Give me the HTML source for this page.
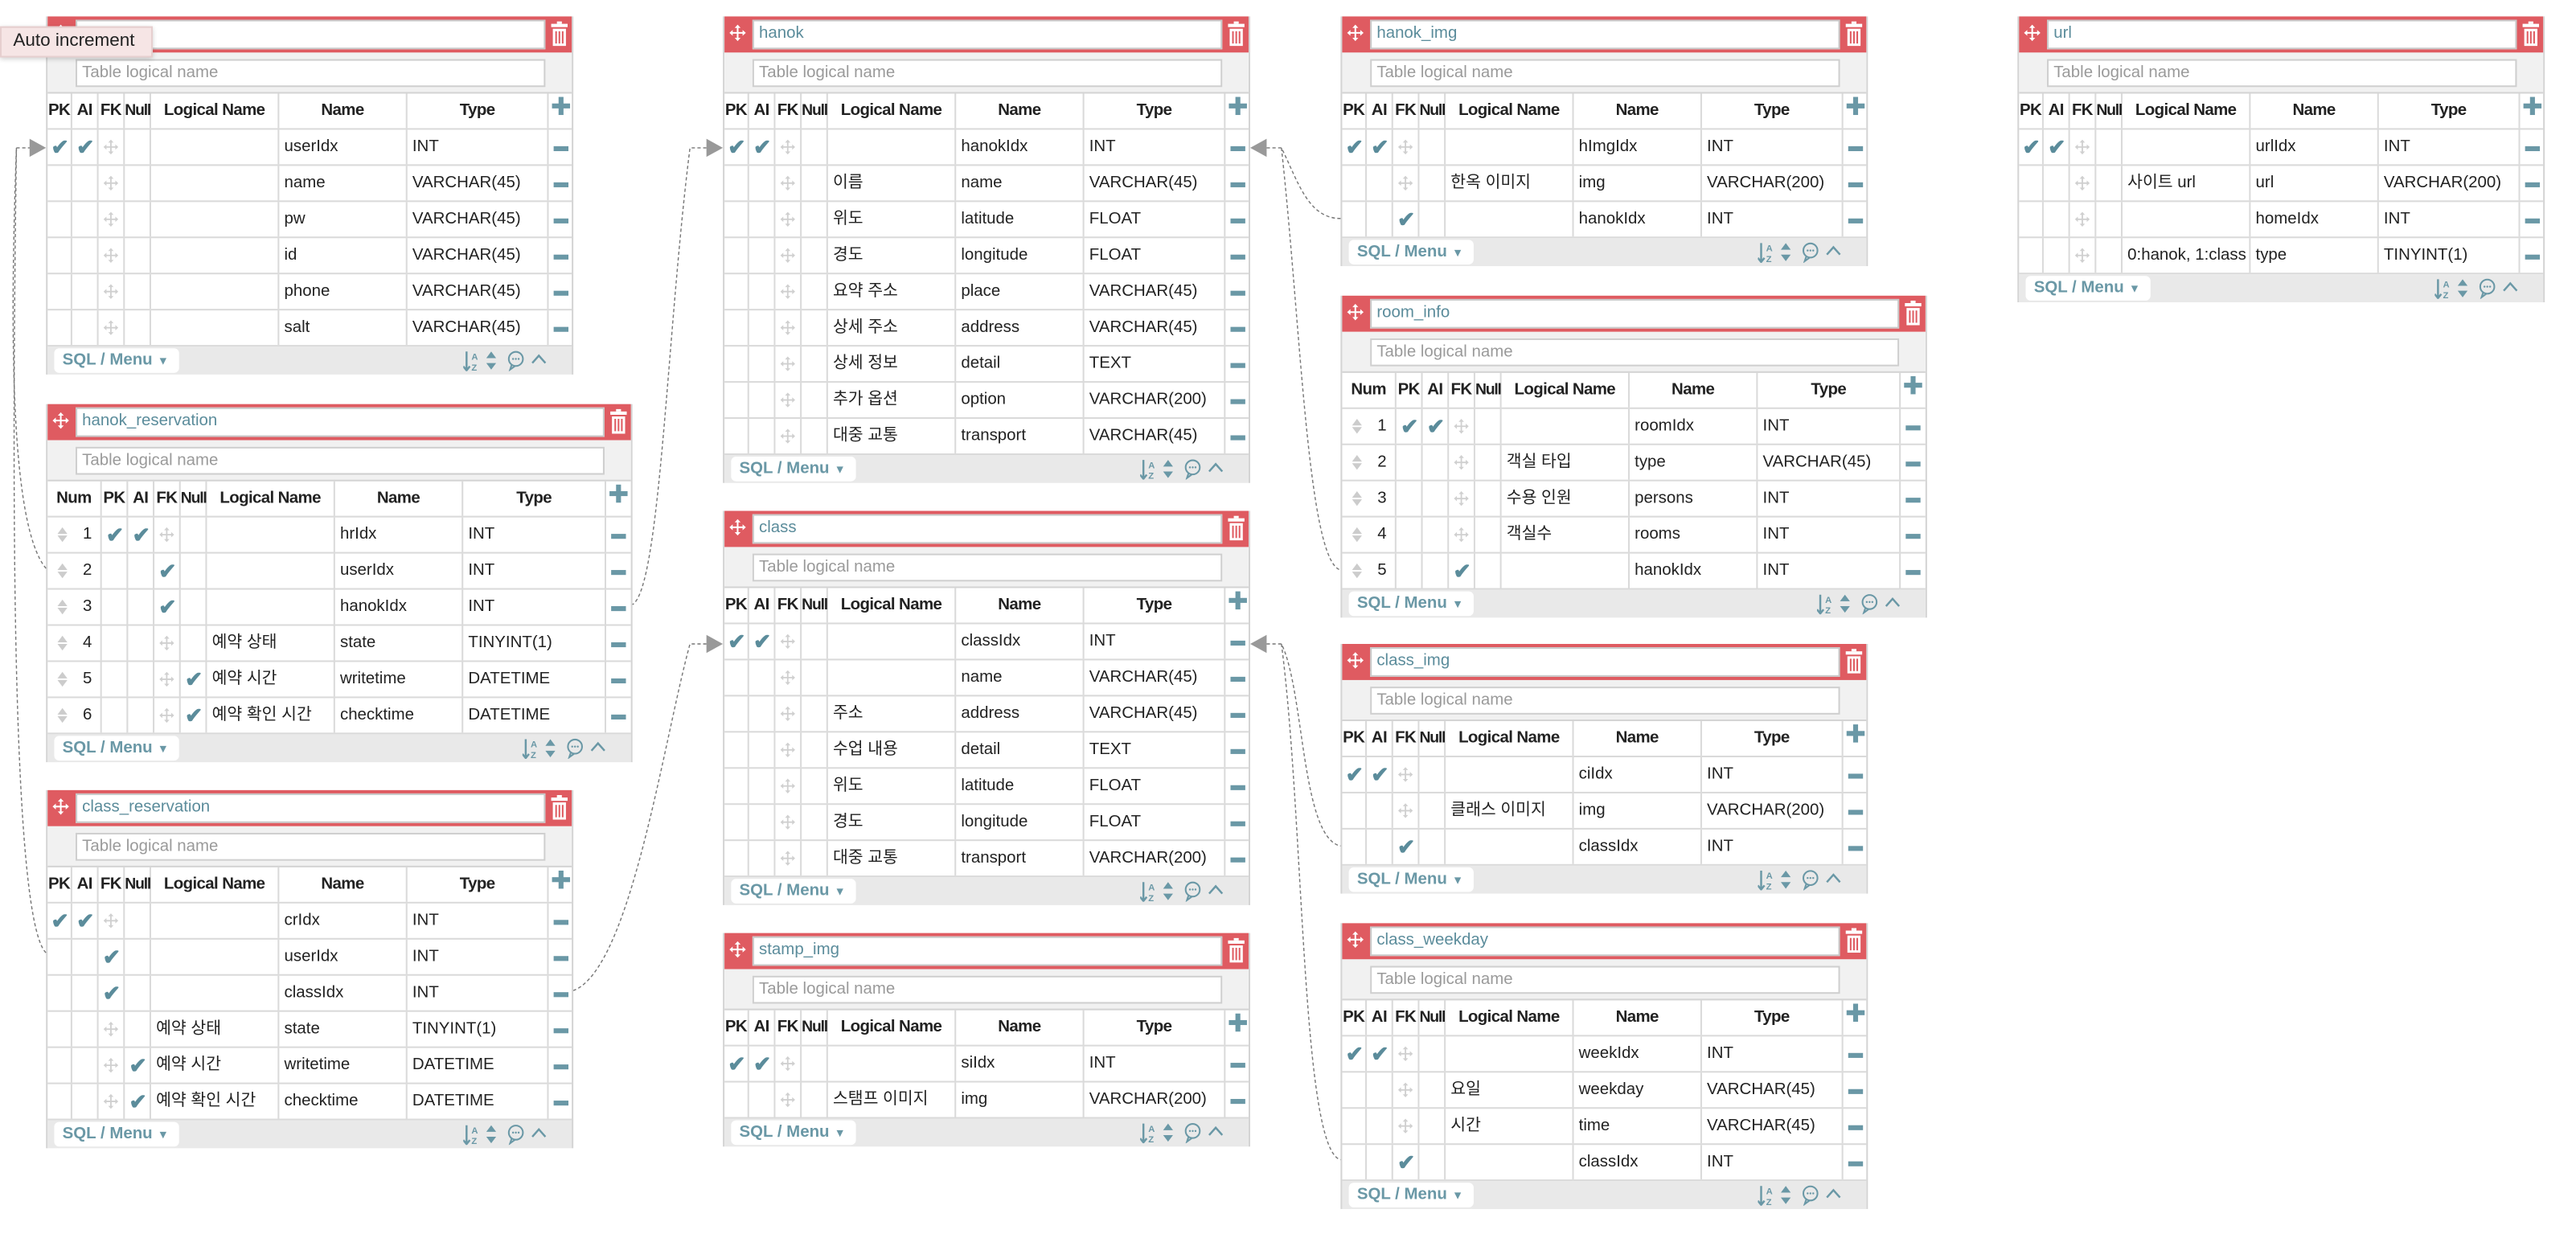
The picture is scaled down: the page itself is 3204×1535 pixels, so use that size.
<!DOCTYPE html>
<html><head><meta charset="utf-8">
<style>
*{box-sizing:border-box;margin:0;padding:0}
body{width:3204px;height:1534px;background:#fff;overflow:hidden;font-family:"Liberation Sans","Noto Sans CJK KR",sans-serif;color:#222}
#w{position:absolute;left:0;top:0;width:1568px;height:751px;transform:scale(2.043367);transform-origin:0 0}
.t{position:absolute;background:#fff;border-left:1px solid #d4d4d4;border-right:1px solid #d4d4d4}
.hd{height:22px;background:#df5b61;position:relative}
.hd .mv{position:absolute;left:3px;top:5px;width:10px;height:10px;fill:#fff}
.hd .in{position:absolute;left:17px;right:16px;top:2px;height:18px;background:#fff;border:1px solid #c9c9c9;color:#5b8c9b;font-size:10px;line-height:16px;padding-left:3px}
.hd .tr{position:absolute;right:2px;top:3px;width:11px;height:15px}
.ln{height:25px;background:#f1f1f1;position:relative;border-bottom:1px solid #d4d4d4}
.ln .in{position:absolute;left:17px;right:16px;top:4px;height:17px;background:#fff;border:1px solid #cfcfcf;color:#9a9a9a;font-size:10px;line-height:15px;padding-left:3px}
.r{display:grid;height:22px;border-bottom:1px solid #dadada;font-size:10px;line-height:21px}
.a .r{grid-template-columns:15px 16px 16px 16px 78px 78px 86px 14px}
.m .r{grid-template-columns:33px 16px 16px 16px 16px 78px 78px 87px 14px}
.r>div{border-right:1px solid #dadada;overflow:hidden;white-space:nowrap;padding-left:3px;position:relative}
.r>div:last-child{border-right:none}
.h{font-weight:bold;text-align:center;letter-spacing:-0.3px}
.h>div{padding-left:0;overflow:visible!important}
.h>div:nth-last-child(5){font-size:9.5px;letter-spacing:-0.6px}
.k{color:#5b8c9b;font-size:13px;font-weight:bold;padding-left:1px!important;text-align:center}
.f svg{position:absolute;left:3px;top:6px;width:9px;height:9px;fill:#d0d0d0}
.x i{position:absolute;left:3px;top:10px;width:9px;height:3px;background:#6a98a6}
.p i{position:absolute;left:2px;top:6px;width:11px;height:3px;background:#6a98a6}
.p b{position:absolute;left:6px;top:2px;width:3px;height:11px;background:#6a98a6}
.nm{text-align:right;padding-right:5px}
.nm s{position:absolute;left:6px;top:6px;width:6px;height:10px}
.nm s:before{content:"";position:absolute;left:0;top:0;border-left:3px solid transparent;border-right:3px solid transparent;border-bottom:4px solid #ccc}
.nm s:after{content:"";position:absolute;left:0;top:5px;border-left:3px solid transparent;border-right:3px solid transparent;border-top:4px solid #ccc}
.ft{height:17px;background:#e9e9e9;position:relative}
.sq{position:absolute;left:4px;top:1px;height:15px;width:76px;background:#fff;border-radius:3px;color:#6a98a6;font-weight:bold;font-size:10px;line-height:15px;padding-left:5px}
.sq em{font-style:normal;font-size:7px;margin-left:3px}
.ft svg.ic{position:absolute;right:4px;top:2px;width:62px;height:13px}
#tip{position:absolute;left:0;top:16px;width:93px;height:19px;background:#f6e5e5;border:1px solid #e6cfcf;box-shadow:0 1px 3px rgba(0,0,0,.2);font-size:11px;line-height:17px;padding-left:7px;color:#222;z-index:5}
#cn{position:absolute;left:0;top:0;width:1568px;height:751px;z-index:4}
</style></head><body>
<svg width="0" height="0" style="position:absolute">
<defs>
<symbol id="mv" viewBox="0 0 10 10"><path d="M5 0L3.2 2H4.5V4.5H2V3.2L0 5L2 6.8V5.5H4.5V8H3.2L5 10L6.8 8H5.5V5.5H8V6.8L10 5L8 3.2V4.5H5.5V2H6.8Z"/></symbol>
<symbol id="tr" viewBox="0 0 11 15"><g fill="#fff"><rect x="4" y="0" width="3" height="1.5"/><rect x="0.5" y="1.5" width="10" height="2"/><path d="M1.5 4.5H9.5V15H1.5ZM3 6V13.5H4V6ZM5 6V13.5H6V6ZM7 6V13.5H8V6Z" fill-rule="evenodd"/></g></symbol>
<symbol id="ic" viewBox="0 0 62 13"><g fill="#6a98a6" stroke="#6a98a6"><path d="M2 1V12M0 10L2 12.5L4 10" fill="none" stroke-width="1.2"/><text x="5" y="6" font-size="5.5" font-family="Liberation Sans" stroke="none" font-weight="bold">A</text><text x="5" y="12.5" font-size="5.5" font-family="Liberation Sans" stroke="none" font-weight="bold">Z</text><path d="M17 1L20 5H14ZM17 12L20 8H14Z" stroke="none"/><circle cx="32" cy="5.5" r="4.3" fill="none" stroke-width="1"/><path d="M29.5 9L28.5 12L31.5 9.8" fill="none" stroke-width="1"/><circle cx="30.3" cy="5.5" r=".6" stroke="none"/><circle cx="32" cy="5.5" r=".6" stroke="none"/><circle cx="33.7" cy="5.5" r=".6" stroke="none"/><path d="M42 8L46 3.5L50 8" fill="none" stroke-width="1.2"/></g></symbol>
</defs></svg>
<div id="w">
<div id="tip">Auto increment</div>

<!-- user -->
<div class="t a" style="left:28px;top:10px;width:321px">
<div class="hd"><svg class="mv"><use href="#mv"/></svg><div class="in"></div><svg class="tr"><use href="#tr"/></svg></div>
<div class="ln"><div class="in">Table logical name</div></div>
<div class="r h"><div>PK</div><div>AI</div><div>FK</div><div>Null</div><div>Logical Name</div><div>Name</div><div>Type</div><div class="p"><i></i><b></b></div></div>
<div class="r"><div class="k">✔</div><div class="k">✔</div><div class="f"><svg><use href="#mv"/></svg></div><div></div><div></div><div>userIdx</div><div>INT</div><div class="x"><i></i></div></div>
<div class="r"><div></div><div></div><div class="f"><svg><use href="#mv"/></svg></div><div></div><div></div><div>name</div><div>VARCHAR(45)</div><div class="x"><i></i></div></div>
<div class="r"><div></div><div></div><div class="f"><svg><use href="#mv"/></svg></div><div></div><div></div><div>pw</div><div>VARCHAR(45)</div><div class="x"><i></i></div></div>
<div class="r"><div></div><div></div><div class="f"><svg><use href="#mv"/></svg></div><div></div><div></div><div>id</div><div>VARCHAR(45)</div><div class="x"><i></i></div></div>
<div class="r"><div></div><div></div><div class="f"><svg><use href="#mv"/></svg></div><div></div><div></div><div>phone</div><div>VARCHAR(45)</div><div class="x"><i></i></div></div>
<div class="r"><div></div><div></div><div class="f"><svg><use href="#mv"/></svg></div><div></div><div></div><div>salt</div><div>VARCHAR(45)</div><div class="x"><i></i></div></div>
<div class="ft"><span class="sq">SQL / Menu<em>▼</em></span><svg class="ic"><use href="#ic"/></svg></div>
</div>

<!-- hanok_reservation -->
<div class="t m" style="left:28px;top:246px;width:357px">
<div class="hd"><svg class="mv"><use href="#mv"/></svg><div class="in">hanok_reservation</div><svg class="tr"><use href="#tr"/></svg></div>
<div class="ln"><div class="in">Table logical name</div></div>
<div class="r h"><div>Num</div><div>PK</div><div>AI</div><div>FK</div><div>Null</div><div>Logical Name</div><div>Name</div><div>Type</div><div class="p"><i></i><b></b></div></div>
<div class="r"><div class="nm"><s></s>1</div><div class="k">✔</div><div class="k">✔</div><div class="f"><svg><use href="#mv"/></svg></div><div></div><div></div><div>hrIdx</div><div>INT</div><div class="x"><i></i></div></div>
<div class="r"><div class="nm"><s></s>2</div><div></div><div></div><div class="k">✔</div><div></div><div></div><div>userIdx</div><div>INT</div><div class="x"><i></i></div></div>
<div class="r"><div class="nm"><s></s>3</div><div></div><div></div><div class="k">✔</div><div></div><div></div><div>hanokIdx</div><div>INT</div><div class="x"><i></i></div></div>
<div class="r"><div class="nm"><s></s>4</div><div></div><div></div><div class="f"><svg><use href="#mv"/></svg></div><div></div><div>예약 상태</div><div>state</div><div>TINYINT(1)</div><div class="x"><i></i></div></div>
<div class="r"><div class="nm"><s></s>5</div><div></div><div></div><div class="f"><svg><use href="#mv"/></svg></div><div class="k">✔</div><div>예약 시간</div><div>writetime</div><div>DATETIME</div><div class="x"><i></i></div></div>
<div class="r"><div class="nm"><s></s>6</div><div></div><div></div><div class="f"><svg><use href="#mv"/></svg></div><div class="k">✔</div><div>예약 확인 시간</div><div>checktime</div><div>DATETIME</div><div class="x"><i></i></div></div>
<div class="ft"><span class="sq">SQL / Menu<em>▼</em></span><svg class="ic"><use href="#ic"/></svg></div>
</div>

<!-- class_reservation -->
<div class="t a" style="left:28px;top:481px;width:321px">
<div class="hd"><svg class="mv"><use href="#mv"/></svg><div class="in">class_reservation</div><svg class="tr"><use href="#tr"/></svg></div>
<div class="ln"><div class="in">Table logical name</div></div>
<div class="r h"><div>PK</div><div>AI</div><div>FK</div><div>Null</div><div>Logical Name</div><div>Name</div><div>Type</div><div class="p"><i></i><b></b></div></div>
<div class="r"><div class="k">✔</div><div class="k">✔</div><div class="f"><svg><use href="#mv"/></svg></div><div></div><div></div><div>crIdx</div><div>INT</div><div class="x"><i></i></div></div>
<div class="r"><div></div><div></div><div class="k">✔</div><div></div><div></div><div>userIdx</div><div>INT</div><div class="x"><i></i></div></div>
<div class="r"><div></div><div></div><div class="k">✔</div><div></div><div></div><div>classIdx</div><div>INT</div><div class="x"><i></i></div></div>
<div class="r"><div></div><div></div><div class="f"><svg><use href="#mv"/></svg></div><div></div><div>예약 상태</div><div>state</div><div>TINYINT(1)</div><div class="x"><i></i></div></div>
<div class="r"><div></div><div></div><div class="f"><svg><use href="#mv"/></svg></div><div class="k">✔</div><div>예약 시간</div><div>writetime</div><div>DATETIME</div><div class="x"><i></i></div></div>
<div class="r"><div></div><div></div><div class="f"><svg><use href="#mv"/></svg></div><div class="k">✔</div><div>예약 확인 시간</div><div>checktime</div><div>DATETIME</div><div class="x"><i></i></div></div>
<div class="ft"><span class="sq">SQL / Menu<em>▼</em></span><svg class="ic"><use href="#ic"/></svg></div>
</div>

<!-- hanok -->
<div class="t a" style="left:440px;top:10px;width:321px">
<div class="hd"><svg class="mv"><use href="#mv"/></svg><div class="in">hanok</div><svg class="tr"><use href="#tr"/></svg></div>
<div class="ln"><div class="in">Table logical name</div></div>
<div class="r h"><div>PK</div><div>AI</div><div>FK</div><div>Null</div><div>Logical Name</div><div>Name</div><div>Type</div><div class="p"><i></i><b></b></div></div>
<div class="r"><div class="k">✔</div><div class="k">✔</div><div class="f"><svg><use href="#mv"/></svg></div><div></div><div></div><div>hanokIdx</div><div>INT</div><div class="x"><i></i></div></div>
<div class="r"><div></div><div></div><div class="f"><svg><use href="#mv"/></svg></div><div></div><div>이름</div><div>name</div><div>VARCHAR(45)</div><div class="x"><i></i></div></div>
<div class="r"><div></div><div></div><div class="f"><svg><use href="#mv"/></svg></div><div></div><div>위도</div><div>latitude</div><div>FLOAT</div><div class="x"><i></i></div></div>
<div class="r"><div></div><div></div><div class="f"><svg><use href="#mv"/></svg></div><div></div><div>경도</div><div>longitude</div><div>FLOAT</div><div class="x"><i></i></div></div>
<div class="r"><div></div><div></div><div class="f"><svg><use href="#mv"/></svg></div><div></div><div>요약 주소</div><div>place</div><div>VARCHAR(45)</div><div class="x"><i></i></div></div>
<div class="r"><div></div><div></div><div class="f"><svg><use href="#mv"/></svg></div><div></div><div>상세 주소</div><div>address</div><div>VARCHAR(45)</div><div class="x"><i></i></div></div>
<div class="r"><div></div><div></div><div class="f"><svg><use href="#mv"/></svg></div><div></div><div>상세 정보</div><div>detail</div><div>TEXT</div><div class="x"><i></i></div></div>
<div class="r"><div></div><div></div><div class="f"><svg><use href="#mv"/></svg></div><div></div><div>추가 옵션</div><div>option</div><div>VARCHAR(200)</div><div class="x"><i></i></div></div>
<div class="r"><div></div><div></div><div class="f"><svg><use href="#mv"/></svg></div><div></div><div>대중 교통</div><div>transport</div><div>VARCHAR(45)</div><div class="x"><i></i></div></div>
<div class="ft"><span class="sq">SQL / Menu<em>▼</em></span><svg class="ic"><use href="#ic"/></svg></div>
</div>

<!-- class -->
<div class="t a" style="left:440px;top:311px;width:321px">
<div class="hd"><svg class="mv"><use href="#mv"/></svg><div class="in">class</div><svg class="tr"><use href="#tr"/></svg></div>
<div class="ln"><div class="in">Table logical name</div></div>
<div class="r h"><div>PK</div><div>AI</div><div>FK</div><div>Null</div><div>Logical Name</div><div>Name</div><div>Type</div><div class="p"><i></i><b></b></div></div>
<div class="r"><div class="k">✔</div><div class="k">✔</div><div class="f"><svg><use href="#mv"/></svg></div><div></div><div></div><div>classIdx</div><div>INT</div><div class="x"><i></i></div></div>
<div class="r"><div></div><div></div><div class="f"><svg><use href="#mv"/></svg></div><div></div><div></div><div>name</div><div>VARCHAR(45)</div><div class="x"><i></i></div></div>
<div class="r"><div></div><div></div><div class="f"><svg><use href="#mv"/></svg></div><div></div><div>주소</div><div>address</div><div>VARCHAR(45)</div><div class="x"><i></i></div></div>
<div class="r"><div></div><div></div><div class="f"><svg><use href="#mv"/></svg></div><div></div><div>수업 내용</div><div>detail</div><div>TEXT</div><div class="x"><i></i></div></div>
<div class="r"><div></div><div></div><div class="f"><svg><use href="#mv"/></svg></div><div></div><div>위도</div><div>latitude</div><div>FLOAT</div><div class="x"><i></i></div></div>
<div class="r"><div></div><div></div><div class="f"><svg><use href="#mv"/></svg></div><div></div><div>경도</div><div>longitude</div><div>FLOAT</div><div class="x"><i></i></div></div>
<div class="r"><div></div><div></div><div class="f"><svg><use href="#mv"/></svg></div><div></div><div>대중 교통</div><div>transport</div><div>VARCHAR(200)</div><div class="x"><i></i></div></div>
<div class="ft"><span class="sq">SQL / Menu<em>▼</em></span><svg class="ic"><use href="#ic"/></svg></div>
</div>

<!-- stamp_img -->
<div class="t a" style="left:440px;top:568px;width:321px">
<div class="hd"><svg class="mv"><use href="#mv"/></svg><div class="in">stamp_img</div><svg class="tr"><use href="#tr"/></svg></div>
<div class="ln"><div class="in">Table logical name</div></div>
<div class="r h"><div>PK</div><div>AI</div><div>FK</div><div>Null</div><div>Logical Name</div><div>Name</div><div>Type</div><div class="p"><i></i><b></b></div></div>
<div class="r"><div class="k">✔</div><div class="k">✔</div><div class="f"><svg><use href="#mv"/></svg></div><div></div><div></div><div>siIdx</div><div>INT</div><div class="x"><i></i></div></div>
<div class="r"><div></div><div></div><div class="f"><svg><use href="#mv"/></svg></div><div></div><div>스탬프 이미지</div><div>img</div><div>VARCHAR(200)</div><div class="x"><i></i></div></div>
<div class="ft"><span class="sq">SQL / Menu<em>▼</em></span><svg class="ic"><use href="#ic"/></svg></div>
</div>

<!-- hanok_img -->
<div class="t a" style="left:816px;top:10px;width:321px">
<div class="hd"><svg class="mv"><use href="#mv"/></svg><div class="in">hanok_img</div><svg class="tr"><use href="#tr"/></svg></div>
<div class="ln"><div class="in">Table logical name</div></div>
<div class="r h"><div>PK</div><div>AI</div><div>FK</div><div>Null</div><div>Logical Name</div><div>Name</div><div>Type</div><div class="p"><i></i><b></b></div></div>
<div class="r"><div class="k">✔</div><div class="k">✔</div><div class="f"><svg><use href="#mv"/></svg></div><div></div><div></div><div>hImgIdx</div><div>INT</div><div class="x"><i></i></div></div>
<div class="r"><div></div><div></div><div class="f"><svg><use href="#mv"/></svg></div><div></div><div>한옥 이미지</div><div>img</div><div>VARCHAR(200)</div><div class="x"><i></i></div></div>
<div class="r"><div></div><div></div><div class="k">✔</div><div></div><div></div><div>hanokIdx</div><div>INT</div><div class="x"><i></i></div></div>
<div class="ft"><span class="sq">SQL / Menu<em>▼</em></span><svg class="ic"><use href="#ic"/></svg></div>
</div>

<!-- room_info -->
<div class="t m" style="left:816px;top:180px;width:357px">
<div class="hd"><svg class="mv"><use href="#mv"/></svg><div class="in">room_info</div><svg class="tr"><use href="#tr"/></svg></div>
<div class="ln"><div class="in">Table logical name</div></div>
<div class="r h"><div>Num</div><div>PK</div><div>AI</div><div>FK</div><div>Null</div><div>Logical Name</div><div>Name</div><div>Type</div><div class="p"><i></i><b></b></div></div>
<div class="r"><div class="nm"><s></s>1</div><div class="k">✔</div><div class="k">✔</div><div class="f"><svg><use href="#mv"/></svg></div><div></div><div></div><div>roomIdx</div><div>INT</div><div class="x"><i></i></div></div>
<div class="r"><div class="nm"><s></s>2</div><div></div><div></div><div class="f"><svg><use href="#mv"/></svg></div><div></div><div>객실 타입</div><div>type</div><div>VARCHAR(45)</div><div class="x"><i></i></div></div>
<div class="r"><div class="nm"><s></s>3</div><div></div><div></div><div class="f"><svg><use href="#mv"/></svg></div><div></div><div>수용 인원</div><div>persons</div><div>INT</div><div class="x"><i></i></div></div>
<div class="r"><div class="nm"><s></s>4</div><div></div><div></div><div class="f"><svg><use href="#mv"/></svg></div><div></div><div>객실수</div><div>rooms</div><div>INT</div><div class="x"><i></i></div></div>
<div class="r"><div class="nm"><s></s>5</div><div></div><div></div><div class="k">✔</div><div></div><div></div><div>hanokIdx</div><div>INT</div><div class="x"><i></i></div></div>
<div class="ft"><span class="sq">SQL / Menu<em>▼</em></span><svg class="ic"><use href="#ic"/></svg></div>
</div>

<!-- class_img -->
<div class="t a" style="left:816px;top:392px;width:321px">
<div class="hd"><svg class="mv"><use href="#mv"/></svg><div class="in">class_img</div><svg class="tr"><use href="#tr"/></svg></div>
<div class="ln"><div class="in">Table logical name</div></div>
<div class="r h"><div>PK</div><div>AI</div><div>FK</div><div>Null</div><div>Logical Name</div><div>Name</div><div>Type</div><div class="p"><i></i><b></b></div></div>
<div class="r"><div class="k">✔</div><div class="k">✔</div><div class="f"><svg><use href="#mv"/></svg></div><div></div><div></div><div>ciIdx</div><div>INT</div><div class="x"><i></i></div></div>
<div class="r"><div></div><div></div><div class="f"><svg><use href="#mv"/></svg></div><div></div><div>클래스 이미지</div><div>img</div><div>VARCHAR(200)</div><div class="x"><i></i></div></div>
<div class="r"><div></div><div></div><div class="k">✔</div><div></div><div></div><div>classIdx</div><div>INT</div><div class="x"><i></i></div></div>
<div class="ft"><span class="sq">SQL / Menu<em>▼</em></span><svg class="ic"><use href="#ic"/></svg></div>
</div>

<!-- class_weekday -->
<div class="t a" style="left:816px;top:562px;width:321px">
<div class="hd"><svg class="mv"><use href="#mv"/></svg><div class="in">class_weekday</div><svg class="tr"><use href="#tr"/></svg></div>
<div class="ln"><div class="in">Table logical name</div></div>
<div class="r h"><div>PK</div><div>AI</div><div>FK</div><div>Null</div><div>Logical Name</div><div>Name</div><div>Type</div><div class="p"><i></i><b></b></div></div>
<div class="r"><div class="k">✔</div><div class="k">✔</div><div class="f"><svg><use href="#mv"/></svg></div><div></div><div></div><div>weekIdx</div><div>INT</div><div class="x"><i></i></div></div>
<div class="r"><div></div><div></div><div class="f"><svg><use href="#mv"/></svg></div><div></div><div>요일</div><div>weekday</div><div>VARCHAR(45)</div><div class="x"><i></i></div></div>
<div class="r"><div></div><div></div><div class="f"><svg><use href="#mv"/></svg></div><div></div><div>시간</div><div>time</div><div>VARCHAR(45)</div><div class="x"><i></i></div></div>
<div class="r"><div></div><div></div><div class="k">✔</div><div></div><div></div><div>classIdx</div><div>INT</div><div class="x"><i></i></div></div>
<div class="ft"><span class="sq">SQL / Menu<em>▼</em></span><svg class="ic"><use href="#ic"/></svg></div>
</div>

<!-- url -->
<div class="t a" style="left:1228px;top:10px;width:321px">
<div class="hd"><svg class="mv"><use href="#mv"/></svg><div class="in">url</div><svg class="tr"><use href="#tr"/></svg></div>
<div class="ln"><div class="in">Table logical name</div></div>
<div class="r h"><div>PK</div><div>AI</div><div>FK</div><div>Null</div><div>Logical Name</div><div>Name</div><div>Type</div><div class="p"><i></i><b></b></div></div>
<div class="r"><div class="k">✔</div><div class="k">✔</div><div class="f"><svg><use href="#mv"/></svg></div><div></div><div></div><div>urlIdx</div><div>INT</div><div class="x"><i></i></div></div>
<div class="r"><div></div><div></div><div class="f"><svg><use href="#mv"/></svg></div><div></div><div>사이트 url</div><div>url</div><div>VARCHAR(200)</div><div class="x"><i></i></div></div>
<div class="r"><div></div><div></div><div class="f"><svg><use href="#mv"/></svg></div><div></div><div></div><div>homeIdx</div><div>INT</div><div class="x"><i></i></div></div>
<div class="r"><div></div><div></div><div class="f"><svg><use href="#mv"/></svg></div><div></div><div>0:hanok, 1:class</div><div>type</div><div>TINYINT(1)</div><div class="x"><i></i></div></div>
<div class="ft"><span class="sq">SQL / Menu<em>▼</em></span><svg class="ic"><use href="#ic"/></svg></div>
</div>

<svg id="cn" viewBox="0 0 1568 751">
<g fill="none" stroke="#777" stroke-width="0.7" stroke-dasharray="2 1.5">
<path d="M19 90H10C6 200 6 320 28 346"/>
<path d="M10 90C7 300 7 560 28 580"/>
<path d="M430 90H420C406 200 402 358 385 368"/>
<path d="M430 392H420C404 450 384 590 349 603"/>
<path d="M771 90H780C790 110 796 133 816 133"/>
<path d="M780 90C792 200 796 342 816 347"/>
<path d="M771 392H780C794 420 792 510 816 515"/>
<path d="M780 392C794 500 792 700 816 706"/>
</g>
<g fill="#999">
<polygon points="18,84.5 28,90 18,95.5"/>
<polygon points="430,84.5 440,90 430,95.5"/>
<polygon points="430,386.5 440,392 430,397.5"/>
<polygon points="771,84.5 761,90 771,95.5"/>
<polygon points="771,386.5 761,392 771,397.5"/>
</g>
</svg>
</div>
</body></html>
